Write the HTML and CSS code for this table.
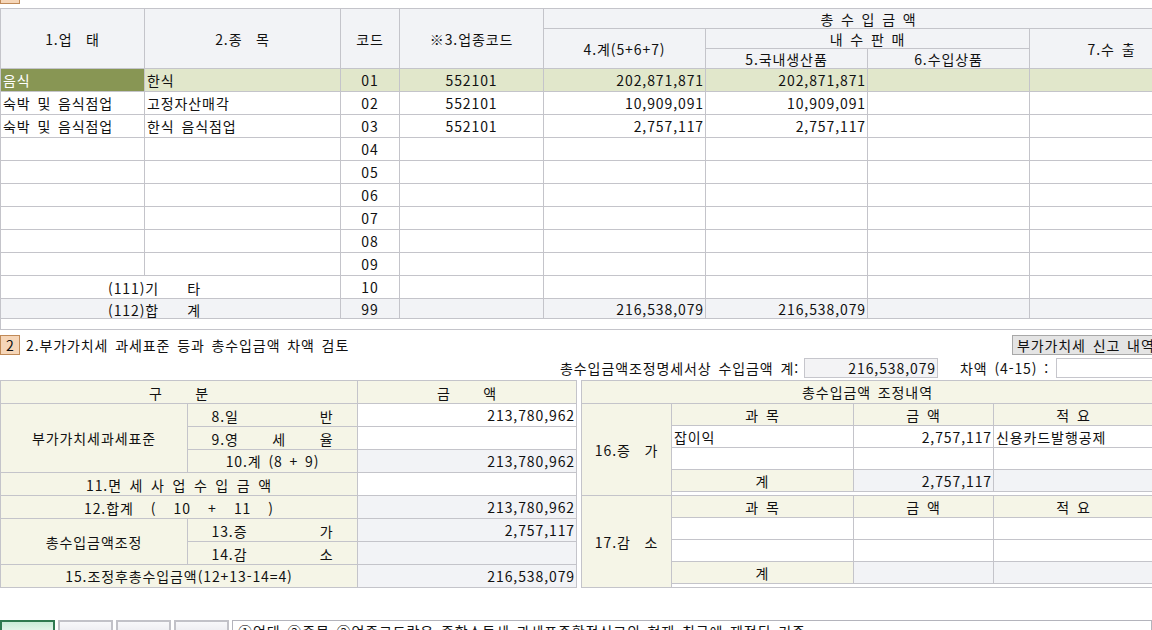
FILE: index.html
```html
<!DOCTYPE html>
<html lang="ko">
<head>
<meta charset="utf-8">
<title>총수입금액조정명세서</title>
<link rel="stylesheet" href="styles.css">
</head>
<body>
<div class="page">
  <div class="badge badge-cut"></div>

  <div class="grid-box">
    <table class="grid top">
      <colgroup>
        <col class="t1"><col class="t2"><col class="t3"><col class="t4">
        <col class="t5"><col class="t6"><col class="t7"><col class="t8">
      </colgroup>
      <thead>
        <tr class="h20">
          <th rowspan="3">1.업&nbsp;&nbsp;태</th>
          <th rowspan="3">2.종&nbsp;&nbsp;목</th>
          <th rowspan="3">코드</th>
          <th rowspan="3">※3.업종코드</th>
          <th colspan="4">총 수 입 금 액</th>
        </tr>
        <tr class="h20">
          <th rowspan="2">4.계(5+6+7)</th>
          <th colspan="2">내 수 판 매</th>
          <th rowspan="2">7.수 출</th>
        </tr>
        <tr class="h20">
          <th>5.국내생산품</th>
          <th>6.수입상품</th>
        </tr>
      </thead>
      <tbody>
        <tr class="r23 sel">
          <td class="l first">음식</td><td class="l">한식</td><td class="c">01</td><td class="c">552101</td>
          <td class="n">202,871,871</td><td class="n">202,871,871</td><td></td><td></td>
        </tr>
        <tr class="r23">
          <td class="l">숙박 및 음식점업</td><td class="l">고정자산매각</td><td class="c">02</td><td class="c">552101</td>
          <td class="n">10,909,091</td><td class="n">10,909,091</td><td></td><td></td>
        </tr>
        <tr class="r23">
          <td class="l">숙박 및 음식점업</td><td class="l">한식 음식점업</td><td class="c">03</td><td class="c">552101</td>
          <td class="n">2,757,117</td><td class="n">2,757,117</td><td></td><td></td>
        </tr>
        <tr class="r23"><td></td><td></td><td class="c">04</td><td></td><td></td><td></td><td></td><td></td></tr>
        <tr class="r23"><td></td><td></td><td class="c">05</td><td></td><td></td><td></td><td></td><td></td></tr>
        <tr class="r23"><td></td><td></td><td class="c">06</td><td></td><td></td><td></td><td></td><td></td></tr>
        <tr class="r23"><td></td><td></td><td class="c">07</td><td></td><td></td><td></td><td></td><td></td></tr>
        <tr class="r23"><td></td><td></td><td class="c">08</td><td></td><td></td><td></td><td></td><td></td></tr>
        <tr class="r23"><td></td><td></td><td class="c">09</td><td></td><td></td><td></td><td></td><td></td></tr>
        <tr class="r23">
          <td colspan="2" class="etc"><span class="spread w92"><span>(111)기</span><span>타</span></span></td>
          <td class="c">10</td><td></td><td></td><td></td><td></td><td></td>
        </tr>
        <tr class="h20 sum">
          <td colspan="2" class="etc"><span class="spread w92"><span>(112)합</span><span>계</span></span></td>
          <td class="c">99</td><td></td><td class="n">216,538,079</td><td class="n">216,538,079</td><td></td><td></td>
        </tr>
      </tbody>
    </table>
  </div>

  <div class="sec-head">
    <div class="badge">2</div>
    <div class="sec-title">2.부가가치세 과세표준 등과 총수입금액 차액 검토</div>
    <div class="btn">부가가치세 신고 내역</div>
  </div>

  <div class="total-row">
    <div class="total-label">총수입금액조정명세서상 수입금액 계:</div>
    <div class="field n">216,538,079</div>
    <div class="diff-label">차액 (4-15) :</div>
    <div class="field field-last"></div>
  </div>

  <div class="lower">
    <table class="grid left">
      <colgroup><col class="l1"><col class="l2"><col class="l3"></colgroup>
      <tr class="r23">
        <th colspan="2" class="cr"><span class="spread w60"><span>구</span><span>분</span></span></th>
        <th class="cr"><span class="spread w60"><span>금</span><span>액</span></span></th>
      </tr>
      <tr class="r23">
        <td rowspan="3" class="cr c">부가가치세과세표준</td>
        <td class="cr"><span class="spread w122"><span>8.일</span><span>반</span></span></td>
        <td class="n">213,780,962</td>
      </tr>
      <tr class="r23">
        <td class="cr"><span class="spread w122"><span>9.영</span><span>세</span><span>율</span></span></td>
        <td></td>
      </tr>
      <tr class="r23">
        <td class="cr c">10.계 (8 + 9)</td>
        <td class="n gray">213,780,962</td>
      </tr>
      <tr class="r23">
        <td colspan="2" class="cr"><span class="spread w186"><span>11.면</span><span>세</span><span>사</span><span>업</span><span>수</span><span>입</span><span>금</span><span>액</span></span></td>
        <td></td>
      </tr>
      <tr class="r23">
        <td colspan="2" class="cr"><span class="spread w190"><span>12.합계</span><span>(</span><span>10</span><span>+</span><span>11</span><span>)</span></span></td>
        <td class="n gray">213,780,962</td>
      </tr>
      <tr class="r23">
        <td rowspan="2" class="cr c">총수입금액조정</td>
        <td class="cr"><span class="spread w122"><span>13.증</span><span>가</span></span></td>
        <td class="n gray">2,757,117</td>
      </tr>
      <tr class="r23">
        <td class="cr"><span class="spread w122"><span>14.감</span><span>소</span></span></td>
        <td class="gray"></td>
      </tr>
      <tr class="r23">
        <td colspan="2" class="cr c">15.조정후총수입금액(12+13-14=4)</td>
        <td class="n gray">216,538,079</td>
      </tr>
    </table>

    <table class="grid right">
      <colgroup><col class="rc1"><col class="rc2"><col class="rc3"><col class="rc4"></colgroup>
      <tr class="r23"><th colspan="4" class="cr">총수입금액 조정내역</th></tr>
      <tr class="r22">
        <td rowspan="5" class="cr c">16.증&nbsp;&nbsp;가</td>
        <th class="cr">과 목</th><th class="cr">금 액</th><th class="cr">적 요</th>
      </tr>
      <tr class="r22"><td class="l">잡이익</td><td class="n">2,757,117</td><td class="l">신용카드발행공제</td></tr>
      <tr class="r22"><td></td><td></td><td></td></tr>
      <tr class="r22"><td class="cr c">계</td><td class="n gray">2,757,117</td><td class="gray"></td></tr>
      <tr class="r4"><td colspan="3"></td></tr>
      <tr class="r22">
        <td rowspan="5" class="cr c">17.감&nbsp;&nbsp;소</td>
        <th class="cr">과 목</th><th class="cr">금 액</th><th class="cr">적 요</th>
      </tr>
      <tr class="r22"><td></td><td></td><td></td></tr>
      <tr class="r22"><td></td><td></td><td></td></tr>
      <tr class="r22"><td class="cr c">계</td><td class="gray"></td><td class="gray"></td></tr>
      <tr class="r4"><td colspan="3"></td></tr>
    </table>
  </div>

  <div class="tabs">
    <div class="tab tab-on"></div>
    <div class="tab"></div>
    <div class="tab"></div>
    <div class="tab"></div>
    <div class="note">①업태 ②종목 ③업종코드란은 종합소득세 과세표준확정신고의 현재 최근에 제정된 기준</div>
  </div>
</div>
</body>
</html>
```

FILE: styles.css
```css
* { box-sizing: border-box; }
html, body { margin: 0; padding: 0; }
body {
  width: 1152px;
  height: 630px;
  overflow: hidden;
  background: #ffffff;
  font-family: "Noto Sans CJK KR", "Noto Sans", sans-serif;
  font-size: 14px;
  line-height: 1;
  color: #111;
  letter-spacing: 0.9px;
  word-spacing: 2px;
}
.page { display: flex; flex-direction: column; width: 1152px; }

.badge {
  width: 20px;
  height: 20px;
  flex: 0 0 20px;
  border: 1px solid #c08a58;
  background: #f6d6b8;
  display: flex;
  align-items: center;
  justify-content: center;
  letter-spacing: 0;
}
.badge-cut { height: 4px; flex: 0 0 4px; border-top: none; }

/* grids */
.grid { border-collapse: separate; border-spacing: 0; table-layout: fixed; }
.grid th, .grid td {
  border-right: 1px solid #c4c4ca;
  border-bottom: 1px solid #c4c4ca;
  padding: 0 2px;
  white-space: nowrap;
  overflow: hidden;
  vertical-align: middle;
  font-weight: normal;
  text-align: center;
}
.h20 { height: 20px; }
.r23 { height: 23px; }
.r22 { height: 22px; }
.r4 { height: 4px; }
.r4 td { padding: 0; font-size: 0; }
.l { text-align: left !important; }
.c { text-align: center; }
.n { text-align: right !important; padding-right: 1px !important; }

.grid-box {
  margin-top: 4px;
  height: 322px;
  flex: 0 0 322px;
  border-top: 1px solid #c4c4ca;
  border-left: 1px solid #c4c4ca;
  border-bottom: 1px solid #c4c4ca;
  overflow: hidden;
}
.top { width: 1193px; }
.top th { background: #f2f3f6; }
.t1 { width: 144px; } .t2 { width: 196px; } .t3 { width: 59px; } .t4 { width: 144px; }
.t5 { width: 162px; } .t6 { width: 162px; } .t7 { width: 162px; } .t8 { width: 164px; }
.sel td { background: #e1e7cb; }
.sel td.first { background: #889654; color: #fff; }
.sum td { background: #f2f3f6; }
.etc { text-align: left !important; padding-left: 107px !important; }

.spread { display: inline-flex; justify-content: space-between; vertical-align: middle; }
.w60 { width: 60px; }
.w92 { width: 93px; }
.w122 { width: 122px; }
.w186 { width: 186px; }
.w190 { width: 190px; }

/* section 2 header */
.sec-head {
  margin-top: 4px;
  height: 21px;
  flex: 0 0 21px;
  display: flex;
  align-items: center;
}
.sec-title { margin-left: 6px; white-space: nowrap; }
.btn {
  margin-left: auto;
  margin-right: -14px;
  width: 154px;
  flex: 0 0 154px;
  height: 20px;
  background: #e4e4e4;
  border: 1px solid #a8a8a8;
  display: flex;
  align-items: center;
  padding-left: 4px;
  white-space: nowrap;
  overflow: hidden;
}
.total-row {
  margin-top: 3px;
  height: 20px;
  flex: 0 0 20px;
  display: flex;
  align-items: center;
}
.total-label { flex: 1; text-align: right; white-space: nowrap; }
.field {
  width: 134px;
  flex: 0 0 134px;
  height: 20px;
  margin-left: 5px;
  background: #f3f3f5;
  border: 1px solid #c6c6cc;
  display: flex;
  align-items: center;
  justify-content: flex-end;
  padding-right: 2px;
}
.diff-label { width: 96px; flex: 0 0 96px; margin-left: 22px; white-space: nowrap; }
.field-last { width: 110px; flex: 0 0 110px; margin-left: 0; margin-right: -14px; background: #fff; }

/* lower tables */
.lower {
  margin-top: 2px;
  display: flex;
  gap: 4px;
  align-items: flex-start;
}
.left, .right { border-top: 1px solid #c4c4ca; border-left: 1px solid #c4c4ca; }
.left { width: 577px; flex: 0 0 577px; }
.l1 { width: 187px; } .l2 { width: 170px; } .l3 { width: 219px; }
.right { width: 573px; flex: 0 0 573px; }
.rc1 { width: 90px; } .rc2 { width: 182px; } .rc3 { width: 140px; } .rc4 { width: 160px; }
.cr { background: #f5f5e7; }
.gray { background: #f2f3f6; }

/* bottom tabs */
.tabs {
  margin-top: 32px;
  display: flex;
  gap: 3px;
  height: 22px;
  flex: 0 0 22px;
}
.tab {
  width: 55px;
  height: 22px;
  flex: 0 0 55px;
  border: 2px solid #c2c2c8;
  background: linear-gradient(#f8f8fa, #e4e4ea);
}
.tab-on {
  border-color: #2e7a50;
  background: linear-gradient(#c9ecd8, #ffffff);
}
.note {
  flex: 1;
  height: 22px;
  border: 1px solid #b4b4bc;
  padding: 3px 5px;
  white-space: nowrap;
  overflow: hidden;
}
```
